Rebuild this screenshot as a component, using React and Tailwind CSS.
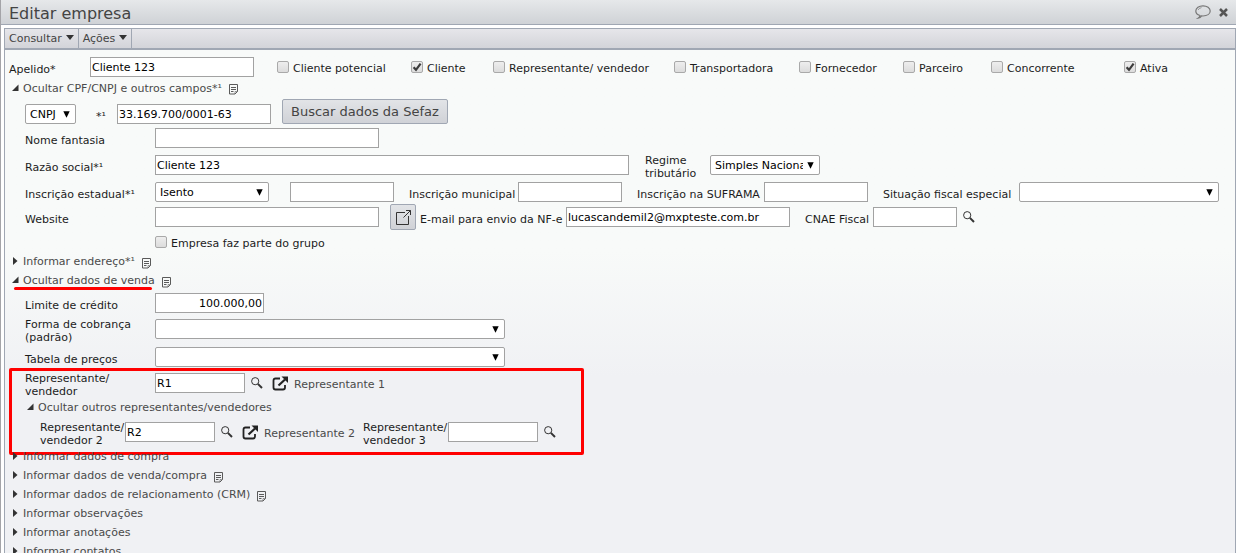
import React, { useId } from "react";

const inputCls =
  "h-5 shrink-0 border border-[#a2a2a2] bg-white px-px text-[11px] text-black outline-none";

function Label({ htmlFor, children, className = "" }) {
  return (
    <label htmlFor={htmlFor} className={`shrink-0 pt-1 leading-[13px] text-[#1c1c1c] ${className}`}>
      {children}
    </label>
  );
}

function TextField({ label, labelClass, width, value = "", className = "" }) {
  const id = useId();
  return (
    <>
      <Label htmlFor={id} className={labelClass}>{label}</Label>
      <input id={id} type="text" defaultValue={value} className={`${inputCls} ${width} ${className}`} />
    </>
  );
}

function Select({ id, label, width, options = [""] }) {
  return (
    <div className={`grid shrink-0 items-center ${width}`}>
      <select
        id={id}
        aria-label={label}
        className="col-start-1 row-start-1 h-5 w-full appearance-none overflow-hidden rounded-xs border border-[#a2a2a2] bg-white pt-0.5 pr-4 pl-1 text-[11px] text-black outline-none"
      >
        {options.map((o) => <option key={o}>{o}</option>)}
      </select>
      <svg viewBox="0 0 7 7" className="pointer-events-none col-start-1 row-start-1 mr-1.5 size-[7px] justify-self-end" fill="#000">
        <path d="M.3 .3h6.400L3.500 6.800z" />
      </svg>
    </div>
  );
}

function SelectField({ label, labelClass, width, options }) {
  const id = useId();
  return (
    <>
      <Label htmlFor={id} className={labelClass}>{label}</Label>
      <Select id={id} width={width} options={options} />
    </>
  );
}

function Check({ label, checked = false, width = "" }) {
  return (
    <label className={`flex shrink-0 items-center gap-1 whitespace-nowrap text-[#1c1c1c] ${width}`}>
      <span className="grid">
        <input
          type="checkbox"
          defaultChecked={checked}
          className="peer col-start-1 row-start-1 size-3 appearance-none rounded-xs border border-[#a9a9a9] bg-linear-to-b from-[#eeeeee] to-[#dcdcdc]"
        />
        <svg viewBox="0 0 12 12" className="pointer-events-none invisible col-start-1 row-start-1 size-3 peer-checked:visible" fill="none" stroke="#3c3c3c" strokeWidth="2.2">
          <path d="M2.6 6.2L5 8.8L9.6 2.6" />
        </svg>
      </span>
      <span className="pt-[3px] leading-[13px]">{label}</span>
    </label>
  );
}

function NoteIcon() {
  return (
    <svg viewBox="0 0 9 11" className="mt-[3px] h-[11px] w-[9px]" fill="none" stroke="#5a5a5a">
      <path d="M.5 .5h8v7l-2.500 2.500h-5.500z" />
      <path d="M2 3.500h5M2 5.500h5M2 7.500h2.500" />
      <path d="M6 10V7.500h2.500" strokeWidth=".6" />
    </svg>
  );
}

function Toggle({ label, open = false, note = false, indent = "pl-[7px]", height = "h-[19px]", underline = false }) {
  return (
    <div className={`flex items-center gap-[7px] ${height} ${indent}`}>
      <button type="button" aria-expanded={open} className="relative flex items-center gap-1 whitespace-nowrap text-[#4a4a4a]">
        <svg viewBox="0 0 7 8" className="mb-px h-2 w-[7px]" fill="#333">
          {open ? <path d="M6.500 .5v6.500H0z" /> : <path d="M1 0v8l4.500-4z" />}
        </svg>
        <span className="pt-0.5">{label}</span>
        {underline && <span className="absolute top-4 left-0.5 h-[3px] w-[138px] rounded-full bg-[#ff0000]" />}
      </button>
      {note && <NoteIcon />}
    </div>
  );
}

function Magnifier() {
  return (
    <button type="button" aria-label="Pesquisar" className="ml-1.5 shrink-0">
      <svg viewBox="0 0 12 12" className="size-3" fill="none" stroke="#333">
        <circle cx="4.200" cy="4.200" r="3.600" />
        <path d="M6.900 6.900L11 11" strokeWidth="2" />
      </svg>
    </button>
  );
}

function OpenLink() {
  return (
    <button type="button" aria-label="Abrir cadastro" className="ml-[9px] shrink-0">
      <svg viewBox="0 0 17 15" className="h-[15px] w-[17px]" fill="none" stroke="#222" strokeWidth="1.800">
        <path d="M8 2.500H3.500Q1.500 2.500 1.500 4.500V11.500Q1.500 13.500 3.500 13.500H11Q13 13.500 13 11.500V9" />
        <path d="M6.500 9.500L13 3.500" strokeWidth="2.200" />
        <path d="M9.500 .5H16V7z" fill="#222" stroke="none" />
      </svg>
    </button>
  );
}

function MenuButton({ children }) {
  return (
    <button type="button" className="flex items-center gap-1 border-r border-[#a0a7b3] px-1">
      <span className="pt-0.5">{children}</span>
      <svg viewBox="0 0 8 5" className="mb-0.5 h-[5px] w-2" fill="#333"><path d="M0 0h8L4 5z" /></svg>
    </button>
  );
}

const row = "flex h-6 items-center whitespace-nowrap";
const first = "w-[130px]";

export default function App() {
  return (
    <div className="flex h-screen flex-col overflow-hidden border-l border-[#a4a4a8] bg-white font-['DejaVu_Sans',Verdana,sans-serif] text-[11px]">
      <header className="flex h-[25px] shrink-0 items-center justify-between border-b border-[#a0a7b3] bg-linear-to-b from-[#e6e8ea] to-[#cfd2d6] px-2">
        <h1 className="pt-1 text-[16px] leading-5 text-[#444]">Editar empresa</h1>
        <div className="flex items-center gap-2">
          <button type="button" aria-label="Comentários">
            <svg viewBox="0 0 16 14" className="h-3.5 w-4" fill="none" stroke="#777" strokeWidth="1.200">
              <path d="M5 10.500C2.500 9.800 .8 8.200 .8 6C.8 3 4 .8 8 .8S15.200 3 15.200 6S12 11 8 11Q7.300 11 6.600 10.900Q5.500 13 3 13.200Q4.800 12 5 10.500z" />
              <path d="M3 5Q4 3 6.500 2.600" strokeWidth=".7" />
            </svg>
          </button>
          <button type="button" aria-label="Fechar">
            <svg viewBox="0 0 9 9" className="size-[9px]" stroke="#555" strokeWidth="2.500"><path d="M1 1l7 7M8 1L1 8" /></svg>
          </button>
        </div>
      </header>

      <main className="mt-[3px] ml-[3px] flex min-h-0 grow flex-col border-x border-t border-[#a0a7b3]">
        <nav className="flex h-[21px] shrink-0 border-b-2 border-[#a0a7b3] bg-linear-to-b from-[#e6e6ea] to-[#d3d4d9] text-[#444]">
          <MenuButton>Consultar</MenuButton>
          <MenuButton>Ações</MenuButton>
        </nav>

        <form className="grow overflow-hidden bg-[#f0f1f4] bg-linear-to-b from-[#f8faf9] from-40% to-[#f0f1f4] to-65% pt-1" onSubmit={(e) => e.preventDefault()}>
          <div className="flex h-[26px] items-center">
            <TextField label="Apelido*" labelClass="w-[85px] pl-1" width="w-[164px]" value="Cliente 123" />
            <div className="flex items-center pl-[23px]">
              <Check label="Cliente potencial" width="w-[134px]" />
              <Check label="Cliente" width="w-[82px]" checked />
              <Check label="Representante/ vendedor" width="w-[181px]" />
              <Check label="Transportadora" width="w-[125px]" />
              <Check label="Fornecedor" width="w-[104px]" />
              <Check label="Parceiro" width="w-[88px]" />
              <Check label="Concorrente" width="w-[133px]" />
              <Check label="Ativa" checked />
            </div>
          </div>
          <Toggle label="Ocultar CPF/CNPJ e outros campos*¹" open note height="h-4" />

          <div className="pl-5">
            <div className={`mt-1.5 ${row}`}>
              <Select label="Tipo de documento" width="w-[51px]" options={["CNPJ"]} />
              <TextField label="*¹" labelClass="w-[41px] pl-5" width="w-[154px]" value="33.169.700/0001-63" />
              <button type="button" className="mb-1.5 ml-[11px] h-[25px] shrink-0 rounded-xs border border-[#a0a7b3] bg-linear-to-b from-[#e2e4e7] to-[#d0d2d7] px-2 pt-0.5 text-[13px] text-[#444]">
                Buscar dados da Sefaz
              </button>
            </div>
            <div className={row}>
              <TextField label="Nome fantasia" labelClass={first} width="w-[224px]" />
            </div>
            <div className={`mt-[3px] ${row}`}>
              <TextField label="Razão social*¹" labelClass={first} width="w-[474px]" value="Cliente 123" />
              <SelectField label={<>Regime<br />tributário</>} labelClass="ml-4 w-[65px]" width="w-[110px]" options={["Simples Nacional"]} />
            </div>
            <div className={`mt-[3px] ${row}`}>
              <SelectField label="Inscrição estadual*¹" labelClass={first} width="w-[114px]" options={["Isento"]} />
              <input aria-label="Número da inscrição estadual" className={`ml-[21px] w-[104px] ${inputCls}`} />
              <TextField label="Inscrição municipal" labelClass="ml-[15px] w-[109px]" width="w-[104px]" />
              <TextField label="Inscrição na SUFRAMA" labelClass="ml-[15px] w-[127px]" width="w-[104px]" />
              <SelectField label="Situação fiscal especial" labelClass="ml-[15px] w-[136px]" width="w-[200px]" />
            </div>
            <div className={`mt-px ${row}`}>
              <TextField label="Website" labelClass={first} width="w-[224px]" />
              <button type="button" aria-label="Abrir website" className="ml-[11px] flex size-[26px] shrink-0 items-center justify-center rounded-xs border border-[#a0a7b3] bg-linear-to-b from-[#e2e4e7] to-[#d0d2d7]">
                <svg viewBox="0 0 17 17" className="size-[17px]" fill="none" stroke="#333">
                  <path d="M10 3.500H1.500V15.500H13.500V7" />
                  <path d="M8.500 8.500L15.500 1.500M11 1.500h4.500V6" />
                </svg>
              </button>
              <TextField label="E-mail para envio da NF-e" labelClass="ml-1 w-[146px]" width="w-[224px]" value="lucascandemil2@mxpteste.com.br" />
              <TextField label="CNAE Fiscal" labelClass="ml-[15px] w-[68px]" width="w-[84px]" />
              <Magnifier />
            </div>
            <div className="mt-[3px] flex h-5 items-center pl-[130px]">
              <Check label="Empresa faz parte do grupo" />
            </div>
          </div>

          <Toggle label="Informar endereço*¹" note />
          <Toggle label="Ocultar dados de venda" open note underline />

          <div className="pl-5">
            <div className={`mt-px ${row}`}>
              <TextField label="Limite de crédito" labelClass={first} width="w-[109px]" value="100.000,00" className="text-right" />
            </div>
            <div className={`mt-0.5 ${row}`}>
              <SelectField label={<>Forma de cobrança<br />(padrão)</>} labelClass={first} width="w-[350px]" />
            </div>
            <div className={`mt-1 ${row}`}>
              <SelectField label="Tabela de preços" labelClass={first} width="w-[350px]" />
            </div>
          </div>

          <section className="relative mt-0.5">
            <div className={`pl-5 ${row}`}>
              <TextField label={<>Representante/<br />vendedor</>} labelClass={first} width="w-[90px]" value="R1" />
              <Magnifier />
              <OpenLink />
              <span className="ml-[5px] pt-1 text-[#4a4a4a]">Representante 1</span>
            </div>
            <div className="mt-[3px]">
              <Toggle label="Ocultar outros representantes/vendedores" open indent="pl-[22px]" />
            </div>
            <div className={`mt-[3px] pl-[35px] ${row}`}>
              <TextField label={<>Representante/<br />vendedor 2</>} labelClass="w-[85px]" width="w-[90px]" value="R2" />
              <Magnifier />
              <OpenLink />
              <span className="ml-[5px] w-[99px] pt-1 text-[#4a4a4a]">Representante 2</span>
              <TextField label={<>Representante/<br />vendedor 3</>} labelClass="w-[85px]" width="w-[90px]" />
              <Magnifier />
            </div>
            <div className="pointer-events-none absolute -top-[3px] -bottom-[11px] left-1 w-[575px] rounded-xs border-3 border-[#ff0000]" />
          </section>

          <div className="mt-[3px]">
            <Toggle label="Informar dados de compra" />
            <Toggle label="Informar dados de venda/compra" note />
            <Toggle label="Informar dados de relacionamento (CRM)" note />
            <Toggle label="Informar observações" />
            <Toggle label="Informar anotações" />
            <Toggle label="Informar contatos" />
          </div>
        </form>
      </main>
    </div>
  );
}
